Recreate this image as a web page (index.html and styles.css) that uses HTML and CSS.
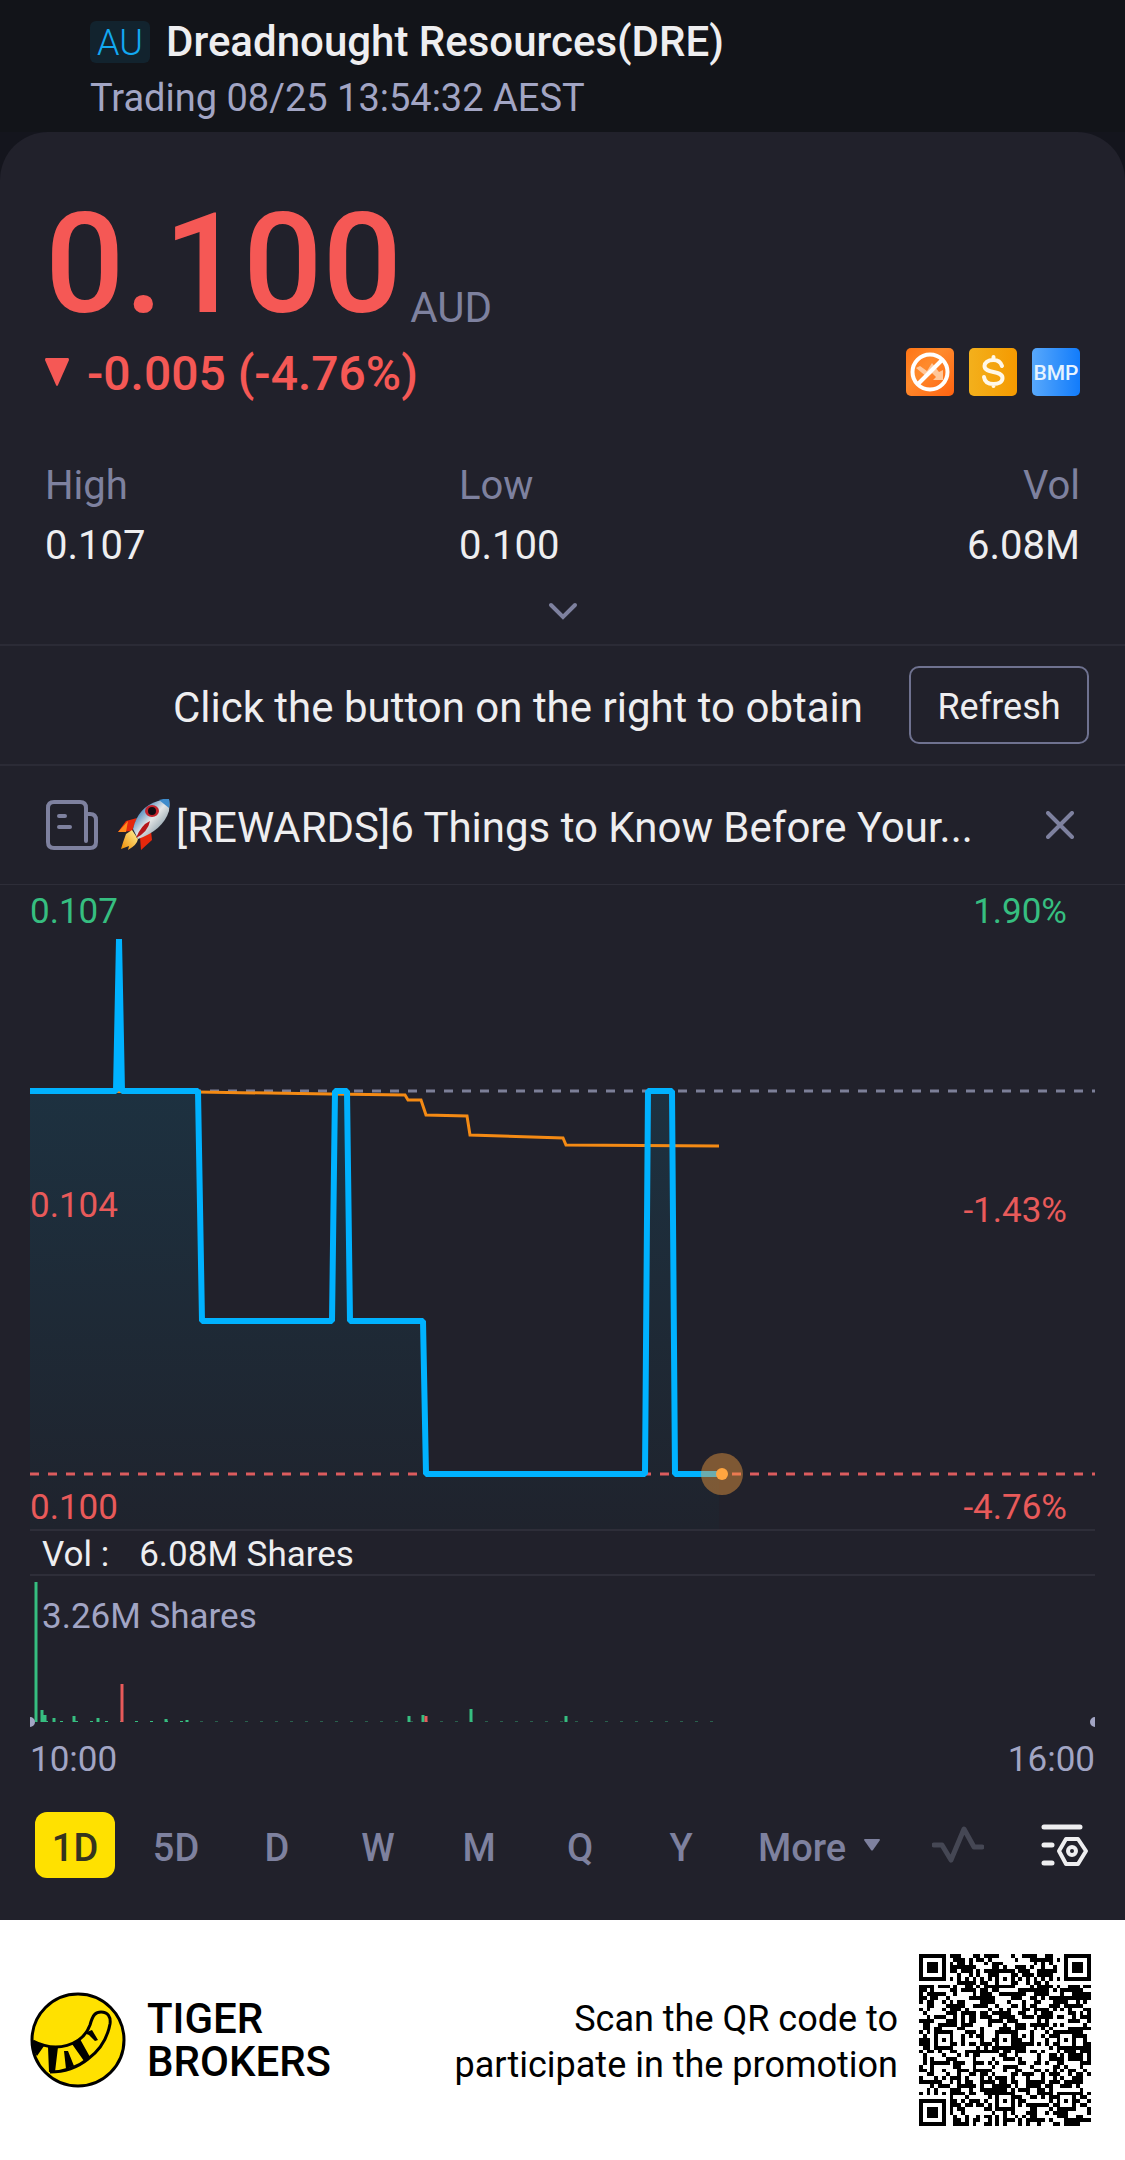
FILE: index.html
```html
<!DOCTYPE html>
<html lang="en">
<head>
    <meta charset="UTF-8">
    <meta name="viewport" content="width=device-width, initial-scale=1.0">
    <title>Dreadnought Resources(DRE)</title>
    <link rel="stylesheet" href="styles.css">
</head>
<body>

    <header class="header">
        <div class="header-title">
            <span class="market">AU</span>
            <h1>Dreadnought Resources(DRE)</h1>
        </div>
        <p class="status">Trading 08/25 13:54:32 AEST</p>
    </header>

    <main class="panel">
        <section class="quote">
            <div class="price-row">
                <span class="price">0.100</span>
                <span class="currency">AUD</span>
            </div>
            <div class="change-row">
                <svg class="down" viewBox="0 0 24 28"><path d="M1 0h22q1 0 1 2L13 27q-1 2-2 0L0 2Q0 0 1 0z" fill="#f55855"/></svg>
                <span class="change">-0.005 (-4.76%)</span>
                <div class="tags">
                    <svg viewBox="0 0 48 48">
                        <defs><linearGradient id="gOrange" x1="0" y1="0" x2="1" y2="1"><stop offset="0" stop-color="#ff7414"/><stop offset=".4" stop-color="#ff8a2c"/><stop offset="1" stop-color="#ff6210"/></linearGradient></defs>
                        <rect width="48" height="48" rx="5" fill="url(#gOrange)"/>
                        <path d="M10 20l4-2 7 5 5-8 7 9 4-2v10h-10l3-3-4-4-5 4z" fill="#ffc79a"/>
                        <circle cx="24" cy="24" r="17.500" fill="none" stroke="#fff" stroke-width="4"/>
                        <path d="M12 36L36 12" stroke="#fff" stroke-width="4"/>
                    </svg>
                    <svg viewBox="0 0 48 48">
                        <defs><linearGradient id="gGold" x1="0" y1="0" x2="1" y2="0"><stop offset="0" stop-color="#f3b01c"/><stop offset="1" stop-color="#f59a00"/></linearGradient></defs>
                        <rect width="48" height="48" rx="5" fill="url(#gGold)"/>
                        <path d="M33 18q-2-6-8.500-6c-6 0-9 3-9 6 0 8 18 4 18 12 0 4-4 6-9 6-6 0-9-3-9.500-7M24.500 9v3M24.500 36v2" fill="none" stroke="#fff8e8" stroke-width="4" stroke-linecap="round"/>
                    </svg>
                    <svg viewBox="0 0 48 48">
                        <defs><linearGradient id="gBlue" x1="0" y1="0" x2="1" y2="0"><stop offset="0" stop-color="#58a8fb"/><stop offset="1" stop-color="#127cfb"/></linearGradient></defs>
                        <rect width="48" height="48" rx="5" fill="url(#gBlue)"/>
                        <text class="bmp" x="24" y="32" text-anchor="middle">BMP</text>
                    </svg>
                </div>
            </div>

            <dl class="stats">
                <div><dt>High</dt><dd>0.107</dd></div>
                <div><dt>Low</dt><dd>0.100</dd></div>
                <div><dt>Vol</dt><dd>6.08M</dd></div>
            </dl>
            <button class="expand" type="button" aria-label="Show more">
                <svg viewBox="0 0 30 18"><path d="M3 3l12 12L27 3" fill="none" stroke="#7e819f" stroke-width="4" stroke-linecap="round"/></svg>
            </button>
        </section>

        <section class="refresh-row">
            <p>Click the button on the right to obtain</p>
            <button class="refresh" type="button">Refresh</button>
        </section>

        <section class="news">
            <svg class="news-icon" viewBox="0 0 52 50">
                <g fill="none" stroke="#7e819f" stroke-width="4" stroke-linecap="round">
                    <path d="M40 41V8q0-6-6-6H8Q2 2 2 8v34q0 6 6 6h36q6 0 6-6V20q0-6-6-6h-4"/>
                    <path d="M13 16h6M13 27h11"/>
                </g>
            </svg>
            <svg class="rocket" viewBox="0 0 52 52">
                <defs>
                    <linearGradient id="gHull" x1="0" y1="0" x2="1" y2="1"><stop offset=".2" stop-color="#3d7fb8"/><stop offset=".5" stop-color="#e4e6e6"/><stop offset=".9" stop-color="#6d8796"/></linearGradient>
                    <linearGradient id="gFlame" x1="1" y1="0" x2="0" y2="1"><stop offset="0" stop-color="#fff59a"/><stop offset="1" stop-color="#f08a00"/></linearGradient>
                </defs>
                <path d="M19 19L8 22 0 33l14-1zM33 32l1 9-11 10-1-13z" fill="#e5280c"/>
                <path d="M10 22L0 33l8 0z" fill="#ff8a1c"/>
                <path d="M8 35q-3 8-5 15l8-3-1 4q9-5 10-11l-6-9z" fill="url(#gFlame)"/>
                <path d="M15 30Q20 8 40 2q7-2 11-1 1 5 0 11-6 19-31 28z" fill="url(#gHull)"/>
                <path d="M41 1q7-2 10-1 1 4 0 9z" fill="#3f8ccc"/>
                <ellipse cx="34" cy="12" rx="7" ry="6" fill="#c4232b"/>
                <ellipse cx="34" cy="12" rx="4" ry="4" fill="#120c12"/>
                <path d="M32 22q-9 4-14 17 12-6 14-17z" fill="#b5161a"/>
            </svg>
            <a class="news-link" href="#">[REWARDS]6 Things to Know Before Your...</a>
            <button class="close" type="button" aria-label="Close">
                <svg viewBox="0 0 28 28"><path d="M2 2l24 24M26 2L2 26" stroke="#7e819f" stroke-width="4" stroke-linecap="round"/></svg>
            </button>
        </section>

        <section class="chart">
            <svg class="plot" viewBox="0 0 1065 644">
                <defs>
                    <linearGradient id="gArea" gradientUnits="userSpaceOnUse" x1="0" y1="206" x2="0" y2="644"><stop offset="0" stop-color="#1d3140"/><stop offset="1" stop-color="#1f232d"/></linearGradient>
                </defs>
                <path d="M0 206H168L172 436H302L305 206H317L320 436H393L396 589H615L618 206H642L645 589H689V644H0z" fill="url(#gArea)"/>
                <path d="M0 206H1065" stroke="#7c7f98" stroke-width="3" stroke-dasharray="9 9"/>
                <path d="M0 589H1065" stroke="#dc5c5e" stroke-width="3" stroke-dasharray="9 9"/>
                <polyline class="average" points="0,206 168,207 300,209 375,210 378,215 391,215 396,230 437,231 440,250 533,253 536,260 689,261"/>
                <polyline class="line" points="0,206 86,206 89,54 92,206 168,206 172,436 302,436 305,206 317,206 320,436 393,436 396,589 615,589 618,206 642,206 645,589 692,589"/>
                <circle cx="692" cy="589" r="21" fill="#ffa540" fill-opacity=".42"/>
                <circle cx="692" cy="589" r="6" fill="#ffa540"/>
                <g class="scale">
                    <text class="up" x="0" y="38">0.107</text>
                    <text class="fall" x="0" y="332">0.104</text>
                    <text class="fall" x="0" y="634">0.100</text>
                    <g text-anchor="end">
                        <text class="up" x="1037" y="38">1.90%</text>
                        <text class="fall" x="1037" y="337">-1.43%</text>
                        <text class="fall" x="1037" y="634">-4.76%</text>
                    </g>
                </g>
            </svg>
            <div class="volume-head"><span>Vol :</span><span>6.08M Shares</span></div>
            <svg class="volume" viewBox="0 0 1065 154">
                <g stroke="#36be80" stroke-width="3">
                    <path d="M6 6V146M12 134V146M15 139V146M24 142V146M44 140V146M68 142V146M136 143V146M157 144V146M379 140V146M393 139V146M441 133V146M536 140V146"/>
                    <path d="M0 145.500H160" stroke-width="1" stroke-dasharray="3 12"/>
                    <path d="M170 145.500H690" stroke-width="1" stroke-dasharray="3 12" opacity=".4"/>
                </g>
                <path d="M92 108V146M396 140V146" stroke="#e85a5a" stroke-width="3"/>
                <path d="M0 141a5 5 0 0 1 0 10zM1065 141a5 5 0 0 0 0 10z" fill="#a2a5c4"/>
                <text class="volume-max" x="12" y="52">3.26M Shares</text>
            </svg>
            <div class="hours"><span>10:00</span><span>16:00</span></div>
        </section>

        <nav class="periods">
            <button class="tab active" type="button">1D</button>
            <button class="tab" type="button">5D</button>
            <button class="tab" type="button">D</button>
            <button class="tab" type="button">W</button>
            <button class="tab" type="button">M</button>
            <button class="tab" type="button">Q</button>
            <button class="tab" type="button">Y</button>
            <button class="more" type="button">More
                <svg viewBox="0 0 16 12"><path d="M1 0h14q1 0 1 1L9 11q-1 1-2 0L0 1Q0 0 1 0z" fill="#7e819f"/></svg>
            </button>
            <button class="tool" type="button" aria-label="Indicators">
                <svg viewBox="0 0 52 40"><path d="M2 20h8l9 15L32 4l10 18h8" fill="none" stroke="#454754" stroke-width="5" stroke-linecap="round" stroke-linejoin="round"/></svg>
            </button>
            <button class="tool settings" type="button" aria-label="Chart settings">
                <svg viewBox="0 0 48 44">
                    <g fill="none" stroke="#eeeef0" stroke-width="5" stroke-linecap="round" stroke-linejoin="round">
                        <path d="M3 4h36M3 22h8M3 40h8"/>
                        <path d="M25 16h12l8 12-8 13H25l-7-13z" stroke-width="4"/>
                        <circle cx="31" cy="28" r="4" stroke-width="4"/>
                    </g>
                </svg>
            </button>
        </nav>
    </main>

    <footer class="footer">
        <svg class="logo" viewBox="0 0 96 96">
            <circle cx="48" cy="48" r="46" fill="#ffe100" stroke="#000" stroke-width="3"/>
            <path d="M3 49C26 61 52 54 60 33C63 22 66 20 71 20C78 20 81 25 80 32C77 48 69 59 58 67C48 75 34 80 20 80" fill="none" stroke="#000" stroke-width="3"/>
            <path d="M2 49l12 5-7 10-4-6zM18 55h10l-3 25h-6zM34 59h4l6 15-8 3zM42 52l8-5 10 18-6 4zM54 41l8-3 6 10-3 1-6-6z"/>
        </svg>
        <p class="brand">TIGER<br>BROKERS</p>
        <p class="promo">Scan the QR code to<br>participate in the promotion</p>
        <svg class="qr" id="qr" viewBox="0 0 45 45" shape-rendering="crispEdges"></svg>
    </footer>

    <script src="qr.js"></script>
</body>
</html>
```

FILE: styles.css
```css
* {
    box-sizing: border-box;
}
body {
    margin: 0;
    background-color: #14151d;
    font-family: Roboto, "Liberation Sans", sans-serif;
    font-size: 40px;
    line-height: 48px;
    color: #eeeef0;
}
h1, p, dl, dd {
    margin: 0;
}
button {
    padding: 0;
    border: none;
    background: none;
    font: inherit;
    color: inherit;
    cursor: pointer;
}
svg {
    display: block;
}
.header {
    height: 132px;
    padding: 18px 90px 0;
    background-color: #121419;
}
.header-title {
    display: flex;
    align-items: center;
    gap: 16px;
}
.market {
    width: 60px;
    height: 42px;
    border-radius: 6px;
    background-color: #12232e;
    color: #12a9f2;
    font-size: 36px;
    font-weight: 300;
    line-height: 44px;
    text-align: center;
}
h1 {
    font-size: 42px;
    font-weight: 500;
    line-height: 48px;
}
.status {
    margin-top: 8px;
    font-size: 38px;
    color: #a2a5c4;
}
.panel {
    border-radius: 48px 48px 0 0;
    background-color: #21212b;
}
.quote {
    padding: 60px 45px 0;
}
.price-row {
    display: flex;
    align-items: flex-end;
    gap: 8px;
}
.price {
    font-size: 140px;
    font-weight: 500;
    line-height: 144px;
    color: #f55855;
}
.currency {
    font-size: 42px;
    line-height: 56px;
    color: #7e819f;
}
.change-row {
    display: flex;
    align-items: center;
    height: 48px;
    margin-top: 12px;
    color: #f55855;
}
.down {
    width: 24px;
    height: 28px;
    margin-right: 18px;
}
.change {
    padding-top: 4px;
    font-size: 48px;
    font-weight: 500;
}
.tags {
    display: flex;
    gap: 15px;
    margin-left: auto;
}
.tags svg {
    width: 48px;
    height: 48px;
}
.bmp {
    font-size: 21px;
    font-weight: 500;
    fill: #e6f3ff;
}
.stats {
    display: grid;
    grid-template-columns: 2fr 2fr 1fr;
    margin-top: 66px;
}
.stats div:last-child {
    text-align: right;
}
dt {
    color: #7e819f;
}
dd {
    margin-top: 12px;
}
.expand {
    display: block;
    width: 30px;
    margin: 32px auto 0;
    padding-bottom: 24px;
}
.refresh-row {
    display: flex;
    align-items: center;
    justify-content: flex-end;
    gap: 46px;
    height: 120px;
    padding-right: 36px;
    border-top: 2px solid #2b2b36;
    font-size: 42px;
}
.refresh-row p, .news-link {
    padding-top: 6px;
}
.refresh {
    width: 180px;
    height: 78px;
    padding-top: 4px;
    border: 2px solid #6f7290;
    border-radius: 10px;
    font-size: 36px;
}
.news {
    display: flex;
    align-items: center;
    height: 120px;
    padding: 0 51px 0 46px;
    border-top: 2px solid #2b2b36;
    font-size: 42px;
}
.news-icon {
    width: 52px;
    height: 50px;
}
.rocket {
    width: 52px;
    height: 52px;
    margin: 0 6px 0 20px;
}
.news-link {
    color: inherit;
    text-decoration: none;
    white-space: nowrap;
}
.close {
    width: 28px;
    margin-left: auto;
}
.chart {
    padding: 0 30px;
    border-top: 1px solid #2e2e39;
}
.plot, .volume {
    width: 100%;
}
.line {
    fill: none;
    stroke: #00b2ff;
    stroke-width: 6;
    stroke-linejoin: bevel;
}
.average {
    fill: none;
    stroke: #f48a14;
    stroke-width: 3;
}
.scale, .volume-max {
    font-size: 35px;
}
.up {
    fill: #36be80;
}
.fall {
    fill: #e85a5a;
}
.volume-head {
    display: flex;
    gap: 30px;
    height: 47px;
    padding-left: 12px;
    border-top: 2px solid #2e2e39;
    border-bottom: 2px solid #2e2e39;
    font-size: 35px;
    line-height: 48px;
}
.volume-max {
    fill: #a2a5c4;
}
.hours {
    display: flex;
    justify-content: space-between;
    font-size: 35px;
    line-height: 60px;
    color: #a2a5c4;
}
.periods {
    display: flex;
    align-items: center;
    gap: 21px;
    padding: 22px 36px 42px 35px;
    font-size: 38px;
    font-weight: 500;
    color: #7e819f;
}
.tab {
    width: 80px;
    height: 66px;
    padding-top: 6px;
}
.active {
    border-radius: 12px;
    background-color: #ffe100;
    color: #35341f;
}
.more {
    display: flex;
    align-items: center;
    gap: 18px;
    margin: 0 auto 0 16px;
    padding-top: 6px;
}
.more svg {
    width: 16px;
    margin-bottom: 6px;
}
.tool {
    width: 52px;
    margin-right: 36px;
}
.settings {
    width: 48px;
    margin-right: 0;
}
.footer {
    display: flex;
    align-items: center;
    height: 240px;
    padding: 0 34px 0 30px;
    background-color: #fff;
    color: #000;
}
.logo {
    width: 96px;
}
.brand {
    margin-left: 21px;
    font-size: 42px;
    font-weight: 500;
    line-height: 43px;
}
.promo {
    margin-left: auto;
    padding-top: 4px;
    font-size: 36px;
    line-height: 46px;
    text-align: right;
}
.qr {
    width: 172px;
    margin-left: 21px;
}
```

FILE: qr.js
```js
const size = 45;
const finders = [[3, 3], [41, 3], [3, 41]];
const alignments = [[22, 6], [6, 22], [22, 22], [38, 22], [22, 38], [38, 38]];
let seed = 825;

function nextBit() {
    seed = (seed * 16807) % 2147483647;
    return seed / 2147483647 < 0.5;
}

function distance(x, y, [cx, cy]) {
    return Math.max(Math.abs(x - cx), Math.abs(y - cy));
}

let path = "";
for (let y = 0; y < size; y++) {
    for (let x = 0; x < size; x++) {
        let dark = nextBit();
        if (x === 6 || y === 6) dark = (x + y) % 2 === 0;

        for (const center of alignments) {
            const d = distance(x, y, center);
            if (d <= 2) dark = d !== 1;
        }
        for (const center of finders) {
            const d = distance(x, y, center);
            if (d <= 4) dark = d < 2 || d === 3;
        }
        if (dark) path += `M${x} ${y}h1v1h-1z`;
    }
}
document.getElementById("qr").innerHTML = `<path d="${path}"/>`;
```
